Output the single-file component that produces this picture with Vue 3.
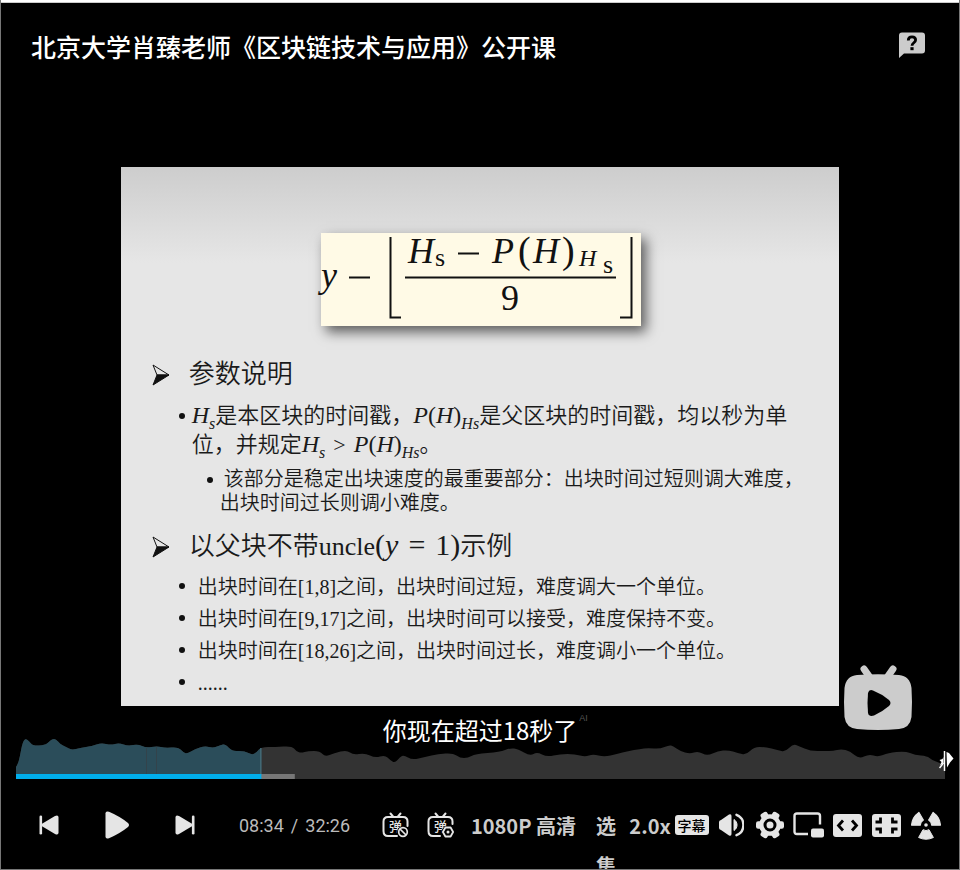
<script setup>
import { computed, ref } from 'vue'

const title = '北京大学肖臻老师《区块链技术与应用》公开课'
const duration = 1946
const current = ref(514)
const buffered = 584

const trackWidth = 929
const trackHeight = 42

// Viewer activity along the timeline: [position, height above the baseline]
const activity = [
  [0, 12], [2, 15], [4, 23], [6, 34], [8, 39], [10, 40], [13, 38], [17, 33], [29, 34], [33, 37],
  [36, 40], [40, 40], [44, 35], [50, 32], [56, 29], [64, 31], [76, 33], [85, 36], [95, 34], [103, 36],
  [112, 33], [122, 35], [130, 31], [141, 33], [149, 31], [162, 32], [167, 27], [171, 25], [179, 30],
  [189, 33], [197, 31], [205, 34], [209, 35], [213, 31], [217, 28], [229, 28], [236, 24], [241, 27],
  [245, 32], [259, 32], [276, 33], [280, 28], [285, 26], [292, 28], [304, 28], [309, 22], [318, 26],
  [331, 29], [337, 24], [349, 26], [359, 21], [369, 24], [374, 19], [379, 16], [384, 22], [388, 24],
  [396, 19], [409, 22], [422, 25], [437, 26], [444, 21], [452, 21], [459, 25], [484, 27], [494, 31],
  [502, 30], [514, 23], [521, 27], [531, 22], [544, 25], [559, 25], [569, 22], [577, 25], [588, 22],
  [601, 25], [612, 28], [624, 30], [632, 31], [644, 30], [653, 34], [657, 33], [664, 28], [674, 25],
  [682, 28], [691, 23], [702, 28], [712, 29], [722, 26], [730, 24], [738, 32], [749, 32], [762, 29],
  [769, 27], [777, 35], [783, 33], [794, 28], [809, 28], [817, 28], [825, 30], [834, 28], [843, 20],
  [853, 25], [862, 22], [872, 26], [889, 28], [899, 24], [911, 23], [916, 19], [924, 16], [929, 13]
]

const wavePath = computed(() => {
  const pts = activity.map(([x, h]) => [x, trackHeight - h])
  let d = `M0 ${trackHeight}L${pts[0][0]} ${pts[0][1]}`
  for (let i = 1; i < pts.length - 1; i++) {
    const mx = (pts[i][0] + pts[i + 1][0]) / 2
    const my = (pts[i][1] + pts[i + 1][1]) / 2
    d += `Q${pts[i][0]} ${pts[i][1]} ${mx} ${my}`
  }
  const last = pts[pts.length - 1]
  return `${d}L${last[0]} ${last[1]}V${trackHeight}Z`
})

const playedX = computed(() => (current.value / duration) * trackWidth)
const bufferedX = (buffered / duration) * trackWidth

function clock(s) {
  const m = Math.floor(s / 60)
  return `${String(m).padStart(2, '0')}:${String(s % 60).padStart(2, '0')}`
}
</script>

<template>
  <main class="player">
    <header class="top">
      <h1 class="title">{{ title }}</h1>
      <button class="icon-btn help" type="button" aria-label="帮助">
        <svg width="26" height="26" viewBox="0 0 26 26">
          <path d="M3 0.500H23A3 3 0 0 1 26 3.500V18.500A3 3 0 0 1 23 21.500H5L0 26V3.500A3 3 0 0 1 3 0.500Z" fill="#ccc" />
          <path d="M9.300 8.400C9.300 6 10.800 4.900 13 4.900S16.600 6.100 16.600 8C16.600 10.800 13 10.700 13 13.700" fill="none" stroke="#000" stroke-width="2.800" />
          <rect x="11.400" y="15.200" width="3.200" height="3" fill="#000" />
        </svg>
      </button>
    </header>

    <section class="stage">
      <article class="slide">
        <svg class="formula" width="320" height="93" viewBox="0 0 320 93" role="img" aria-label="y − ⌊(Hs − P(H)Hs) / 9⌋">
          <g class="ital">
            <text x="0" y="54" font-size="36">y</text>
            <text x="87" y="30" font-size="36">H</text>
            <text x="171" y="30" font-size="36">P</text>
            <text x="212" y="30" font-size="36">H</text>
            <text x="258" y="33" font-size="24">H</text>
          </g>
          <g class="roman">
            <text x="114" y="33" font-size="26">s</text>
            <text x="197" y="30" font-size="38">(</text>
            <text x="241" y="30" font-size="38">)</text>
            <text x="282" y="40" font-size="26">s</text>
            <text x="180" y="77" font-size="36">9</text>
          </g>
          <g fill="none" stroke="#111" stroke-width="2">
            <path d="M28 44.500H49M137 20.500H158M84 44.500H295" />
            <path d="M69.500 4V84.500H80M310.500 4V84.500H299" />
          </g>
        </svg>

        <h2 class="topic">
          <svg class="arrow" width="18" height="22" viewBox="0 0 18 22">
            <path d="M1 1L17 11L5 11Z" fill="#e6e6e6" stroke="#111" />
            <path d="M1 21L17 11H5Z" fill="#111" stroke="#111" />
          </svg>
          参数说明
        </h2>
        <ul class="list para">
          <li>
            <i>H<sub>s</sub></i>是本区块的时间戳，<i>P<b>(</b>H<b>)</b><sub>Hs</sub></i>是父区块的时间戳，均以秒为单<br>位，并规定<i>H<sub>s</sub></i><span class="op">&gt;</span><i>P<b>(</b>H<b>)</b><sub>Hs</sub></i>。
          </li>
        </ul>
        <ul class="list note">
          <li>该部分是稳定出块速度的最重要部分：出块时间过短则调大难度，<br>出块时间过长则调小难度。</li>
        </ul>
        <h2 class="topic second">
          <svg class="arrow" width="18" height="22" viewBox="0 0 18 22">
            <path d="M1 1L17 11L5 11Z" fill="#e6e6e6" stroke="#111" />
            <path d="M1 21L17 11H5Z" fill="#111" stroke="#111" />
          </svg>
          <span>以父块不带uncle<span class="math">(<i>y</i><span class="op">=</span>1)</span>示例</span>
        </h2>
        <ul class="list cases">
          <li>出块时间在[1,8]之间，出块时间过短，难度调大一个单位。</li>
          <li>出块时间在[9,17]之间，出块时间可以接受，难度保持不变。</li>
          <li>出块时间在[18,26]之间，出块时间过长，难度调小一个单位。</li>
          <li>......</li>
        </ul>
      </article>
      <p class="caption"><span class="caption-text">你现在超过18秒了<span class="ai">AI</span></span></p>
    </section>

    <svg class="brand" width="70" height="66" viewBox="0 0 70 66" aria-hidden="true">
      <path d="M21 4L28 14M50 4L43 14" stroke="#ccc" stroke-width="7" stroke-linecap="round" />
      <path d="M14 10Q35 8.500 56 10Q67 11 68.500 23Q69.500 37 68.500 52Q67 63 56 64Q35 66 14 64Q3 63 1.500 52Q0.500 37 1.500 23Q3 11 14 10Z" fill="#ccc" />
      <path d="M25 28Q26 24 30 25.500Q39 29 46 35Q49 38 46 41Q39 47 31 50.500Q26 52 25 48Q24 38 25 28Z" fill="#000" />
    </svg>

    <div class="progress">
      <svg class="wave" :viewBox="`0 0 ${trackWidth} ${trackHeight}`" preserveAspectRatio="none">
        <defs>
          <clipPath id="played"><rect x="0" y="0" :width="playedX" :height="trackHeight" /></clipPath>
        </defs>
        <path :d="wavePath" fill="#333" />
        <path :d="wavePath" fill="#2b4d5a" clip-path="url(#played)" />
        <path d="M130.500 11V37M140.500 10V37" stroke="#33434b" stroke-width="1" />
        <rect :x="playedX - 1" y="11" width="1" height="26" fill="#4f7884" />
        <rect x="0" y="37" :width="bufferedX" height="5" fill="#777" />
        <rect x="0" y="37" :width="playedX" height="5" fill="#00aeec" />
      </svg>
      <svg class="thumb" width="16" height="22" viewBox="0 0 16 22" aria-hidden="true">
        <path d="M5.500 1V21" stroke="#fff" stroke-width="1.500" />
        <path d="M7.500 2L10 3L14.500 8.500L11 12.500L8 17.500Z" fill="#fff" />
        <path d="M4.500 7L3.500 9L0.500 10L2.500 12L1 15.500L4.500 13Z" fill="#fff" />
        <path d="M0.500 18L4.500 13" stroke="#fff" stroke-width="1.500" />
      </svg>
      <input v-model.number="current" class="seek" type="range" min="0" :max="duration" aria-label="播放进度">
    </div>

    <footer class="controls">
      <button class="icon-btn nav" type="button" aria-label="上一个">
        <svg width="20" height="20" viewBox="0 0 20 20" fill="#e5e5e5">
          <rect x="0.500" y="0.500" width="2.600" height="19" rx="1.300" />
          <path d="M3 8.800L16 1Q19.500 -0.500 19.500 2.500V17.500Q19.500 20.500 16 19L3 11.200Q2 10 3 8.800Z" />
        </svg>
      </button>
      <button class="icon-btn nav" type="button" aria-label="播放">
        <svg width="24" height="28" viewBox="0 0 24 28" fill="#e5e5e5">
          <path d="M0.500 2.500Q0.500 -0.500 4 0.800Q15 5.500 23 12Q25 14 23 16Q15 22.500 4 27.200Q0.500 28.500 0.500 25.500Z" />
        </svg>
      </button>
      <button class="icon-btn nav" type="button" aria-label="下一个">
        <svg width="20" height="20" viewBox="0 0 20 20" fill="#e5e5e5">
          <rect x="16.900" y="0.500" width="2.600" height="19" rx="1.300" />
          <path d="M17 8.800L4 1Q0.500 -0.500 0.500 2.500V17.500Q0.500 20.500 4 19L17 11.200Q18 10 17 8.800Z" />
        </svg>
      </button>
      <div class="time">
        <span>{{ clock(current) }}</span><span>/</span><span>{{ clock(duration) }}</span>
      </div>

      <div class="right">
        <button class="icon-btn danmu" type="button" aria-label="关闭弹幕">
          <svg width="27" height="26" viewBox="0 0 27 26">
            <g fill="none" stroke="#e5e5e5" stroke-width="2" stroke-linecap="round">
              <path d="M8.500 1.500L11 4.500M18.500 1.500L16 4.500" />
              <path d="M15 24H6Q1.500 24 1.500 19V9.500Q1.500 5 6 5H21Q25.500 5 25.500 9.500V14" />
            </g>
            <text x="7" y="18.500" class="glyph" font-size="13">弹</text>
            <circle cx="21" cy="20" r="6" fill="#000" />
            <circle cx="21" cy="20" r="4.300" fill="none" stroke="#e5e5e5" stroke-width="1.700" />
            <path d="M18 17L24 23" stroke="#e5e5e5" stroke-width="1.700" />
          </svg>
        </button>
        <button class="icon-btn danmu" type="button" aria-label="弹幕设置">
          <svg width="27" height="26" viewBox="0 0 27 26">
            <g fill="none" stroke="#e5e5e5" stroke-width="2" stroke-linecap="round">
              <path d="M8.500 1.500L11 4.500M18.500 1.500L16 4.500" />
              <path d="M13 24H6Q1.500 24 1.500 19V9.500Q1.500 5 6 5H21Q25.500 5 25.500 9.500V12" />
            </g>
            <text x="7" y="18.500" class="glyph" font-size="13">弹</text>
            <circle cx="21" cy="20" r="6.500" fill="#000" />
            <path d="M18.400 15.500H23.600L26.100 20L23.600 24.500H18.400L15.900 20Z" fill="none" stroke="#e5e5e5" stroke-width="1.800" stroke-linejoin="round" />
            <circle cx="21" cy="20" r="1.500" fill="#e5e5e5" />
          </svg>
        </button>
        <button class="text-btn quality" type="button">1080P 高清</button>
        <button class="text-btn episodes" type="button">选集</button>
        <button class="text-btn speed" type="button">2.0x</button>
        <button class="icon-btn tool" type="button"><span class="sub-badge">字幕</span></button>
        <button class="icon-btn tool" type="button" aria-label="音量">
          <svg width="26" height="24" viewBox="0 0 26 24">
            <path d="M1 9Q1 7.500 3 7L11 1.500Q13.500 0.500 13.500 3V21Q13.500 23.500 11 22.500L3 17Q1 16.500 1 15Z" fill="#e5e5e5" />
            <path d="M16 6.500A6.500 6.500 0 0 1 16 17.500Z" fill="#e5e5e5" stroke="#e5e5e5" stroke-linejoin="round" />
            <path d="M18.500 1.800A11 11 0 0 1 18.500 22.200" fill="none" stroke="#e5e5e5" stroke-width="2.400" stroke-linecap="round" />
          </svg>
        </button>
        <button class="icon-btn tool" type="button" aria-label="设置">
          <svg width="30" height="28" viewBox="-15 -14 30 28">
            <g fill="#e5e5e5">
              <circle r="10.800" />
              <rect v-for="a in [0, 60, 120]" :key="a" x="-14" y="-3.800" width="28" height="7.600" rx="2.200" :transform="`rotate(${a})`" />
            </g>
            <circle r="5" fill="none" stroke="#000" stroke-width="3" />
          </svg>
        </button>
        <button class="icon-btn tool" type="button" aria-label="画中画">
          <svg width="31" height="26" viewBox="0 0 31 26">
            <path d="M15 22H4Q1.500 22 1.500 19.500V4Q1.500 1.500 4 1.500H24.500Q27 1.500 27 4V12.500" fill="none" stroke="#e5e5e5" stroke-width="2.400" />
            <rect x="18" y="16.500" width="13" height="9" rx="2" fill="#e5e5e5" />
          </svg>
        </button>
        <button class="icon-btn tool" type="button" aria-label="宽屏">
          <svg width="29" height="23" viewBox="0 0 29 23">
            <rect width="29" height="23" rx="3" fill="#e5e5e5" />
            <path d="M10 6.500L5.500 11.500L10 16.500M19 6.500L23.500 11.500L19 16.500" fill="none" stroke="#000" stroke-width="2.800" />
          </svg>
        </button>
        <button class="icon-btn tool" type="button" aria-label="网页全屏">
          <svg width="29" height="23" viewBox="0 0 29 23">
            <rect width="29" height="23" rx="3" fill="#e5e5e5" />
            <path d="M3.500 8H8.500V3.500M25.500 8H20.500V3.500M3.500 15H8.500V19.500M25.500 15H20.500V19.500" fill="none" stroke="#000" stroke-width="2.800" />
          </svg>
        </button>
        <button class="icon-btn tool" type="button" aria-label="全屏">
          <svg width="30" height="30" viewBox="-15 -15 30 30">
            <path v-for="a in [0, 120, 240]" :key="a" d="M-3 4.700Q0 6.500 3 4.700L7.400 12.500Q0 16 -7.400 12.500Z" fill="#e5e5e5" stroke="#e5e5e5" stroke-linejoin="round" :transform="`rotate(${a})`" />
            <circle r="1.800" fill="#e5e5e5" />
          </svg>
        </button>
      </div>
    </footer>
  </main>
</template>

<style>
body {
  margin: 0;
  background: #000;
}
</style>

<style scoped>
* {
  box-sizing: border-box;
}

.player {
  position: relative;
  display: flex;
  flex-direction: column;
  min-height: 100vh;
  overflow: hidden;
  border: 1px solid #777;
  border-top: 0;
  background: #000;
  color: #fff;
  font-family: "Noto Sans CJK SC", sans-serif;
}

.player::before {
  content: "";
  height: 2px;
  background: #fff;
  border-bottom: 1px solid #ccc;
}

button {
  margin: 0;
  padding: 0;
  border: 0;
  background: none;
  color: inherit;
  font-family: inherit;
  cursor: pointer;
}

svg {
  display: block;
}

.top {
  display: flex;
  justify-content: space-between;
  padding: 25px 34px 0 30px;
}

.title {
  margin: 0;
  font-size: 25px;
  line-height: 36px;
  font-weight: 500;
}

.help {
  height: 34px;
}

.stage {
  flex: 1;
  display: flex;
  flex-direction: column;
  align-items: center;
  padding-top: 103px;
}

.slide {
  width: 75%;
  aspect-ratio: 4 / 3;
  padding: 66px 0 0 31px;
  background: linear-gradient(#cdcdcd, #e6e6e6 96px);
  color: #1a1a1a;
  font-family: "Liberation Serif", "Noto Sans CJK SC", serif;
  font-weight: 350;
  white-space: nowrap;
}

.formula {
  overflow: visible;
  margin-left: 169px;
  background: #fffae6;
  box-shadow: 5px 6px 12px rgba(0, 0, 0, 0.6);
  fill: #111;
  font-family: "Liberation Serif", serif;
  font-weight: 400;
}

.ital {
  font-style: italic;
}

.topic {
  display: flex;
  align-items: center;
  gap: 19px;
  margin: 31px 0 8px;
  font-size: 26px;
  line-height: 36px;
  font-weight: 350;
}

.topic.second {
  margin: 14px 0 6px;
}

.math {
  font-size: 30px;
  line-height: 0;
}

.list {
  margin: 0;
  padding: 0;
  list-style: none;
}

.list li {
  position: relative;
}

.list li::before {
  content: "";
  position: absolute;
  top: 12px;
  left: -13px;
  width: 6px;
  height: 6px;
  border-radius: 50%;
  background: #111;
}

.para {
  margin-left: 40px;
  font-size: 22px;
  line-height: 29px;
}

.para i {
  font-size: 24px;
  line-height: 0;
}

.note {
  margin: 8px 0 0 68px;
  font-size: 20px;
  line-height: 24px;
  text-indent: 4px;
}

.note li::before {
  top: 10px;
}

.cases {
  margin-left: 46px;
  font-size: 20px;
  line-height: 32px;
}

.cases li::before {
  left: -19px;
}

.slide b {
  font-style: normal;
  font-weight: inherit;
}

.slide sub {
  font-size: 16px;
  line-height: 0;
}

.op {
  margin: 0 8px;
}

.math .op {
  margin: 0 10px;
}

.caption {
  position: relative;
  z-index: 1;
  margin: 8px 0 0;
  font-size: 24px;
  line-height: 32px;
  font-weight: 400;
}

.caption-text {
  position: relative;
}

.ai {
  position: absolute;
  top: 0;
  left: 100%;
  margin-left: 2px;
  color: #555;
  font-family: "Liberation Sans", sans-serif;
  font-size: 9px;
  line-height: 12px;
}

.brand {
  position: absolute;
  right: 46px;
  bottom: 138px;
}

.progress {
  position: relative;
  margin: -9px 14px 0 15px;
}

.wave {
  width: 100%;
  height: 42px;
}

.thumb {
  position: absolute;
  top: 13px;
  right: -10px;
}

.seek {
  position: absolute;
  inset: 0;
  width: 100%;
  height: 100%;
  margin: 0;
  opacity: 0;
  cursor: pointer;
}

.controls {
  display: flex;
  align-items: flex-start;
  height: 67px;
  margin-top: 23px;
  padding: 0 14px;
  overflow: hidden;
}

.icon-btn {
  display: flex;
  align-items: center;
  justify-content: center;
}

.nav,
.danmu,
.tool {
  height: 46px;
}

.nav {
  width: 68px;
}

.time {
  display: flex;
  gap: 7px;
  margin-left: 20px;
  color: #bbb;
  font-family: Roboto, sans-serif;
  font-size: 18px;
  line-height: 48px;
}

.right {
  display: flex;
  align-items: flex-start;
  margin-left: auto;
}

.danmu {
  width: 45px;
}

.tool {
  width: 39px;
}

.glyph {
  fill: #e5e5e5;
  font-family: "Noto Sans CJK SC", sans-serif;
  font-weight: 500;
}

.text-btn {
  padding-top: 4px;
  color: #ccc;
  font-size: 20px;
  line-height: 40px;
  font-weight: 700;
}

.quality {
  width: 121px;
  white-space: nowrap;
}

.episodes {
  width: 44px;
  padding: 4px 12px 0;
}

.speed {
  width: 44px;
}

.sub-badge {
  padding: 0 3px;
  border-radius: 3px;
  background: #e5e5e5;
  color: #000;
  font-size: 14px;
  line-height: 20px;
  font-weight: 500;
}
</style>
